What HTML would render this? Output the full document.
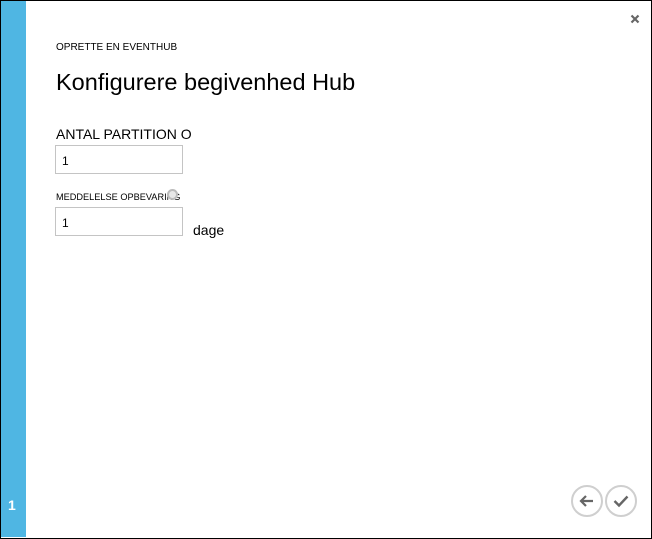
<!DOCTYPE html>
<html><head><meta charset="utf-8"><style>
*{margin:0;padding:0;box-sizing:border-box}
html,body{width:652px;height:539px;overflow:hidden;background:#fff;font-family:"Liberation Sans",Arial,sans-serif;color:#000}
.frame{position:absolute;left:0;top:0;width:652px;height:539px;border:1px solid #000}
.bar{position:absolute;left:1px;top:1px;width:25px;height:536px;background:#4fb6e3}
.num{position:absolute;left:8px;top:497px;color:#fff;font-size:14px;font-weight:bold}
.t{position:absolute;white-space:nowrap}
.inp{position:absolute;left:55px;width:128px;height:29px;border:1px solid #c4c4c4;font-size:12px;padding:8px 0 0 6px}
.circ{position:absolute;width:32px;height:32px;border:2px solid #cfcfcf;border-radius:50%}
</style></head><body>
<div class="frame"></div>
<div class="bar"></div>
<div class="num">1</div>
<svg class="t" style="left:630px;top:14px" width="10" height="10"><path d="M1.5 1.5L8.5 8.5M8.5 1.5L1.5 8.5" stroke="#666" stroke-width="2.2"/></svg>
<div class="t" style="left:56px;top:42px;font-size:10px">OPRETTE EN EVENTHUB</div>
<div class="t" style="left:56px;top:69px;font-size:23.5px">Konfigurere begivenhed Hub</div>
<div class="t" style="left:56px;top:126px;font-size:14px">ANTAL PARTITION O</div>
<div class="inp" style="top:145px">1</div>
<div class="t" style="left:56px;top:192px;font-size:9.2px">MEDDELELSE OPBEVARING</div>
<div style="position:absolute;left:167px;top:189px;width:11px;height:11px;border-radius:50%;border:2px solid #bbb;background:#e8e8e8"></div>
<div class="inp" style="top:207px">1</div>
<div class="t" style="left:193px;top:222px;font-size:14px">dage</div>
<div class="circ" style="left:571px;top:485px"></div>
<div class="circ" style="left:605px;top:485px"></div>
<svg class="t" style="left:571px;top:485px" width="32" height="32"><path d="M10 16H22M15 11L10 16L15 21" stroke="#666" stroke-width="2.2" fill="none"/></svg>
<svg class="t" style="left:605px;top:485px" width="32" height="32"><path d="M9.5 16L14 20.5L22.5 11.5" stroke="#666" stroke-width="2.4" fill="none"/></svg>
</body></html>
